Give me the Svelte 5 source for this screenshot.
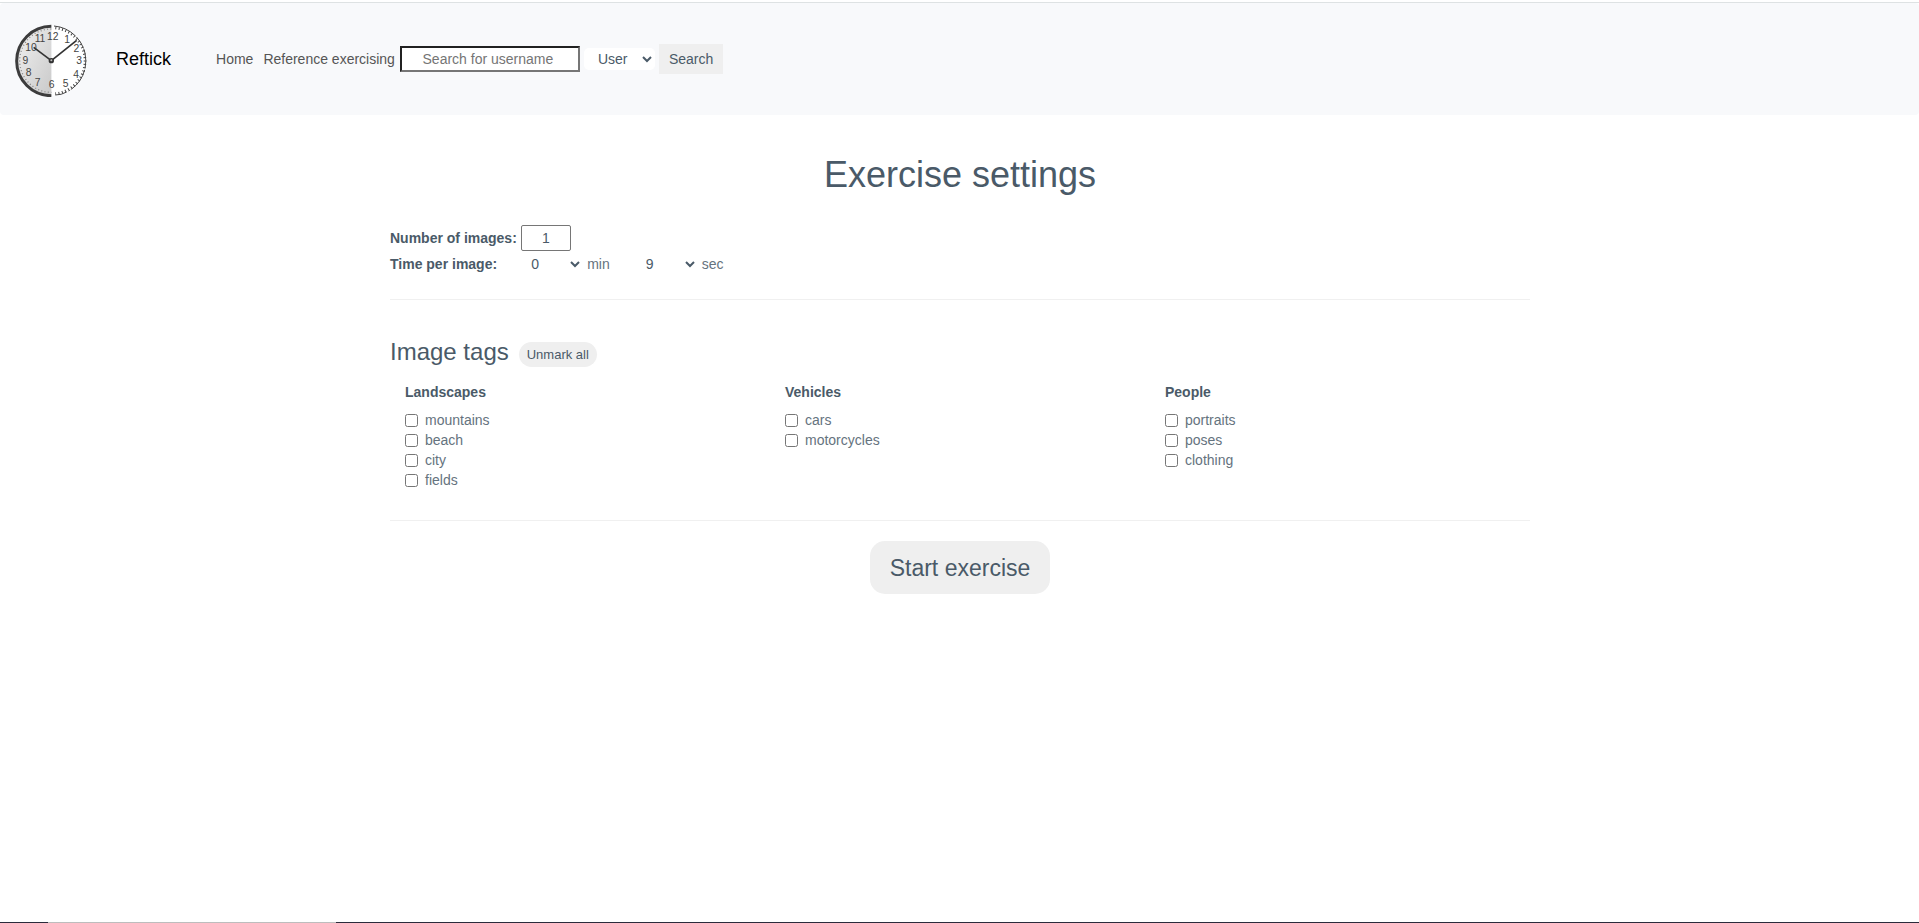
<script>
  const groups = [
    { name: 'Landscapes', tags: ['mountains', 'beach', 'city', 'fields'] },
    { name: 'Vehicles', tags: ['cars', 'motorcycles'] },
    { name: 'People', tags: ['portraits', 'poses', 'clothing'] }
  ];
  let selected = $state([]);
  let count = $state(1);
  let minutes = $state(0);
  let seconds = $state(9);
  const range = Array.from({ length: 60 }, (_, i) => i);

  // Clock face numerals: [text, x, y]
  const numerals = [
    ['12', 158, 108], ['1', 201, 117], ['2', 229, 144], ['3', 237, 180],
    ['4', 228, 221], ['5', 197, 250], ['6', 155, 253], ['7', 113, 246],
    ['8', 86, 215], ['9', 76, 179], ['10', 93, 140], ['11', 120, 115]
  ];
</script>

<div class="page">
  <header>
    <a class="brand" href="#home">
      <svg viewBox="45 71 219 219" width="73" height="73" aria-hidden="true">
        <defs>
          <linearGradient id="face" x1="0" y1="0" x2="1" y2="1">
            <stop offset="0" stop-color="#f2f2f2" />
            <stop offset="1" stop-color="#c9c9c9" />
          </linearGradient>
        </defs>
        <path d="M154 78A104 104 0 0 0 154 286Z" fill="url(#face)" />
        <path d="M156 76A105 105 0 0 1 156 286Z" fill="#fff" />
        <path d="M154 78A104 104 0 0 0 154 286" fill="none" stroke="#3c3c3c" stroke-width="9" />
        <path d="M162 77A105 105 0 0 1 206 272" fill="none" stroke="#444" stroke-width="3" stroke-dasharray="72 4 38 3 60 5" />
        <path d="M200 275Q184 284 166 284" fill="none" stroke="#444" stroke-width="3" />
        <path d="M154 86A95 95 0 0 0 154 276" fill="none" stroke="#888" stroke-width="4" stroke-dasharray="3 6.9" />
        <path d="M166 83A99 99 0 0 1 166 280" fill="none" stroke="#444" stroke-width="8" stroke-dasharray="3 7.3" />
        {#each numerals as [text, x, y]}
          <text {x} y={y + 11}>{text}</text>
        {/each}
        <path d="M154 181L101 141" stroke="#333" stroke-width="5" />
        <path d="M154 181L230 120" stroke="#333" stroke-width="5" />
        <circle cx="154" cy="181" r="8" fill="#333" />
        <circle cx="154" cy="180" r="3" fill="#bbb" />
      </svg>
      <span>Reftick</span>
    </a>
    <nav>
      <a href="#home">Home</a>
      <a href="#exercise">Reference exercising</a>
    </nav>
    <form onsubmit={(e) => e.preventDefault()}>
      <input class="search" type="text" placeholder="Search for username" aria-label="Search for username" />
      <select class="kind" aria-label="Search type">
        <option>User</option>
        <option>Tag</option>
      </select>
      <button class="submit">Search</button>
    </form>
  </header>

  <main>
    <h1>Exercise settings</h1>
    <div class="row">
      <label for="count">Number of images:</label>
      <input id="count" class="count" type="text" inputmode="numeric" bind:value={count} />
    </div>
    <div class="row time">
      <label for="minutes">Time per image:</label>
      <select id="minutes" bind:value={minutes}>
        {#each range as n}<option value={n}>{n}</option>{/each}
      </select>
      <span>min</span>
      <select aria-label="Seconds" bind:value={seconds}>
        {#each range as n}<option value={n}>{n}</option>{/each}
      </select>
      <span>sec</span>
    </div>
    <hr />
    <div class="tags-head">
      <h2>Image tags</h2>
      <button class="unmark" onclick={() => (selected = [])}>Unmark all</button>
    </div>
    <div class="groups">
      {#each groups as group}
        <section>
          <h3>{group.name}</h3>
          {#each group.tags as tag}
            <label class="tag">
              <input type="checkbox" value={tag} bind:group={selected} />
              {tag}
            </label>
          {/each}
        </section>
      {/each}
    </div>
    <hr />
    <button class="start">Start exercise</button>
  </main>
  <footer></footer>
</div>

<style>
  :global(body) {
    margin: 0;
    background: #fff;
  }
  .page {
    display: flex;
    flex-direction: column;
    min-height: 100vh;
    box-sizing: border-box;
    padding-top: 2px;
    font: 14px/20px 'Liberation Sans', Arial, sans-serif;
    color: #65737e;
  }
  .page::before {
    content: '';
    height: 1px;
    background: #dee2e3;
  }
  input, select, button {
    box-sizing: border-box;
    margin: 0;
    font: inherit;
    color: #4a5a68;
  }
  header {
    display: flex;
    align-items: center;
    height: 112px;
    padding: 0 15px;
    border-radius: 4px;
    background: #f8f9fb;
  }
  .brand {
    display: flex;
    align-items: center;
    gap: 28px;
    font-size: 18px;
    color: #000;
    text-decoration: none;
  }
  .brand svg {
    margin-top: 2px;
  }
  .brand svg text {
    font: 31px 'Liberation Sans', Arial, sans-serif;
    fill: #444;
    text-anchor: middle;
  }
  nav {
    display: flex;
    gap: 10px;
    margin-left: 45px;
  }
  nav a {
    color: #555;
    text-decoration: none;
  }
  form {
    display: flex;
    align-items: center;
    gap: 4px;
    margin-left: 5px;
  }
  .search {
    width: 180px;
    height: 26px;
    border: 2px inset #767676;
    padding: 0 4px 0 0;
    text-align: center;
    background: #fff;
  }
  .search::placeholder {
    color: #757575;
  }
  select {
    height: 22px;
    padding: 0 0 0 10px;
    border: 0;
    border-radius: 5px;
    background-color: #fff;
  }
  .kind {
    width: 71px;
  }
  button {
    border: 0;
    background: #efefef;
  }
  .submit {
    height: 30px;
    padding: 0 10px;
  }
  main {
    flex: 1;
    display: flex;
    flex-direction: column;
    box-sizing: border-box;
    width: 100%;
    max-width: 1141px;
    margin: 0 auto;
    padding: 40px 0 0 1px;
  }
  h1, h2, h3 {
    margin: 0;
    color: #4a5a68;
  }
  h1 {
    margin-bottom: 30px;
    font-size: 36px;
    line-height: 40px;
    font-weight: 400;
    text-align: center;
  }
  .row {
    display: flex;
    align-items: center;
    height: 26px;
  }
  .row label {
    font-weight: 700;
    color: #4a5a68;
  }
  .count {
    width: 50px;
    height: 26px;
    margin-left: 4px;
    padding: 0;
    border: 1px solid #767676;
    border-radius: 2px;
    text-align: center;
  }
  .time select {
    width: 66px;
    margin: 0 4px 0 20px;
  }
  .time span + select {
    margin-left: 22px;
  }
  hr {
    width: 100%;
    margin: 22px 0 0;
    border: 0;
    border-top: 1px solid #f0f0f0;
  }
  .tags-head {
    display: flex;
    align-items: flex-start;
    gap: 10px;
    margin-top: 38px;
  }
  h2 {
    font-size: 24px;
    line-height: 28px;
    font-weight: 400;
  }
  .unmark {
    height: 25px;
    margin-top: 4px;
    padding: 0 8px;
    border-radius: 13px;
    font-size: 13px;
  }
  .groups {
    display: grid;
    grid-template-columns: repeat(3, 1fr);
    margin: 15px 0 8px;
  }
  section {
    padding: 0 15px;
  }
  h3 {
    margin-bottom: 8px;
    font-size: 14px;
    line-height: 20px;
  }
  .tag {
    display: flex;
    align-items: center;
    gap: 7px;
  }
  .tag input {
    width: 13px;
    height: 13px;
  }
  .start {
    align-self: center;
    height: 53px;
    margin: 20px 0;
    padding: 0 20px;
    border-radius: 15px;
    font-size: 23px;
  }
  footer {
    height: 1px;
    background: linear-gradient(90deg, #2b2b3b 48px, #bdbdbd 48px 336px, #2b2b3b 336px);
  }
</style>
